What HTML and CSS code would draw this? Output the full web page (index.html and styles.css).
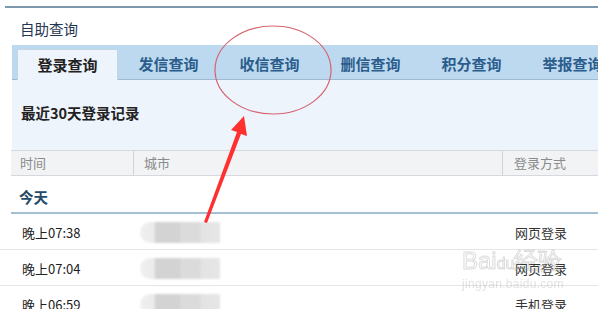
FILE: index.html
```html
<!DOCTYPE html>
<html lang="zh">
<head>
<meta charset="utf-8">
<link rel="stylesheet" href="styles.css">
</head>
<body>
<div class="page">
  <div class="topline"></div>
  <div class="box">
    <div class="title">自助查询</div>
    <div class="tabs">
      <div class="tab active">登录查询</div>
      <div class="tab">发信查询</div>
      <div class="tab">收信查询</div>
      <div class="tab">删信查询</div>
      <div class="tab">积分查询</div>
      <div class="tab">举报查询</div>
    </div>
    <div class="summary">最近30天登录记录</div>
    <div class="thead">
      <div class="th c1">时间</div>
      <div class="th c2">城市</div>
      <div class="th c3">登录方式</div>
    </div>
    <div class="day">今天</div>
    <div class="row">
      <div class="td c1">晚上07:38</div>
      <div class="td c2"><span class="blur"></span></div>
      <div class="td c3">网页登录</div>
    </div>
    <div class="row">
      <div class="td c1">晚上07:04</div>
      <div class="td c2"><span class="blur"></span></div>
      <div class="td c3">网页登录</div>
    </div>
    <div class="row">
      <div class="td c1">晚上06:59</div>
      <div class="td c2"><span class="blur"></span></div>
      <div class="td c3">手机登录</div>
    </div>
  </div>
  <div class="watermark">
    <span class="wm-big">Bai<span class="paw">du</span>经验</span>
    <span class="wm-small">jingyan.baidu.com</span>
  </div>
  <svg class="annot" width="598" height="309" viewBox="0 0 598 309">
    <ellipse cx="273" cy="70" rx="58" ry="44" fill="none" stroke="#d56470" stroke-width="1.2"/>
    <path d="M204 222 L237 132 L231 130 L244 116 L247 136 L241 134 L207 223 Z" fill="#ff3030"/>
  </svg>
</div>
</body>
</html>
```
FILE: styles.css
```css
* { box-sizing: border-box; }
html, body { margin: 0; padding: 0; background: #fff; }
body {
  font-family: "Noto Sans CJK SC", "Noto Sans", sans-serif;
  width: 598px;
  height: 309px;
  overflow: hidden;
}
.page { position: relative; padding-top: 6px; height: 309px; overflow: hidden; }
.topline { margin-left: 5px; border-top: 2px solid #7d98ac; }
.box { margin-left: 12px; width: 600px; }
.title {
  height: 37px;
  padding-left: 8px;
  font-size: 14.5px;
  line-height: 42px;
  color: #1f3550;
}
.tabs {
  display: flex;
  align-items: flex-end;
  height: 35px;
  padding-left: 5px;
  background: #bcd9f0;
  border-bottom: 1px solid #9ebad0;
}
.tab {
  width: 101px;
  flex: none;
  height: 30px;
  line-height: 29px;
  text-align: center;
  font-size: 15px;
  font-weight: bold;
  color: #2b5d8c;
}
.tab.active {
  background: #eef4fb;
  border: 1px solid #c3d6e6;
  border-bottom: none;
  margin-bottom: -1px;
  height: 31px;
  color: #222;
}
.summary {
  height: 70px;
  background: #eef4fb;
  padding-left: 9px;
  font-size: 14.5px;
  font-weight: bold;
  line-height: 66px;
  color: #222;
}
.thead {
  display: flex;
  height: 26px;
  background: #f1f3f5;
  border-top: 1px solid #d3d9de;
  border-bottom: 1px solid #d3d9de;
  margin-left: -1px;
}
.th { font-size: 13px; color: #8a8a8a; line-height: 24px; }
.c1 { width: 122px; padding-left: 9px; flex: none; }
.c2 { width: 369px; padding-left: 10px; flex: none; }
.c3 { flex: none; width: 110px; padding-left: 11px; }
.thead .c2, .thead .c3 { border-left: 1px solid #cfd4d9; }
.day {
  height: 38px;
  line-height: 42px;
  padding-left: 8px;
  font-size: 14.5px;
  font-weight: bold;
  color: #254a68;
  border-bottom: 2px solid #a3bfd3;
  margin-left: -1px;
}
.row {
  display: flex;
  height: 36px;
  border-bottom: 1px solid #e3e6e9;
  margin-left: -12px;
  padding-left: 12px;
}
.td { font-size: 13px; color: #222; line-height: 38px; }
.row .c1 { padding-left: 10px; }
.row .c3 { color: #333; padding-left: 12px; }
.blur {
  display: block;
  margin-top: 8px;
  margin-left: -4px;
  width: 80px;
  height: 21px;
  border-radius: 11px 0 0 11px;
  background: linear-gradient(90deg, #f0f0f0 0%, #ebebeb 18%, #d3d3d3 19%, #d3d3d3 50%, #dbdbdb 51%, #dbdbdb 75%, #e3e3e3 76%, #e6e6e6 100%);
  filter: blur(1px);
}
.watermark {
  position: absolute;
  left: 462px;
  top: 248px;
  width: 130px;
  opacity: 0.35;
  color: #b8b8b8;
  pointer-events: none;
}
.wm-big {
  display: block;
  font-family: "Liberation Sans", sans-serif;
  font-size: 24px;
  line-height: 26px;
  color: transparent;
  -webkit-text-stroke: 1px #9a9a9a;
}
.paw { font-size: 16px; }
.wm-small {
  display: block;
  font-family: "Liberation Sans", sans-serif;
  font-size: 12px;
  line-height: 14px;
  color: #aaa;
  letter-spacing: 0.3px;
}
.annot { position: absolute; left: 0; top: 0; pointer-events: none; }
```
